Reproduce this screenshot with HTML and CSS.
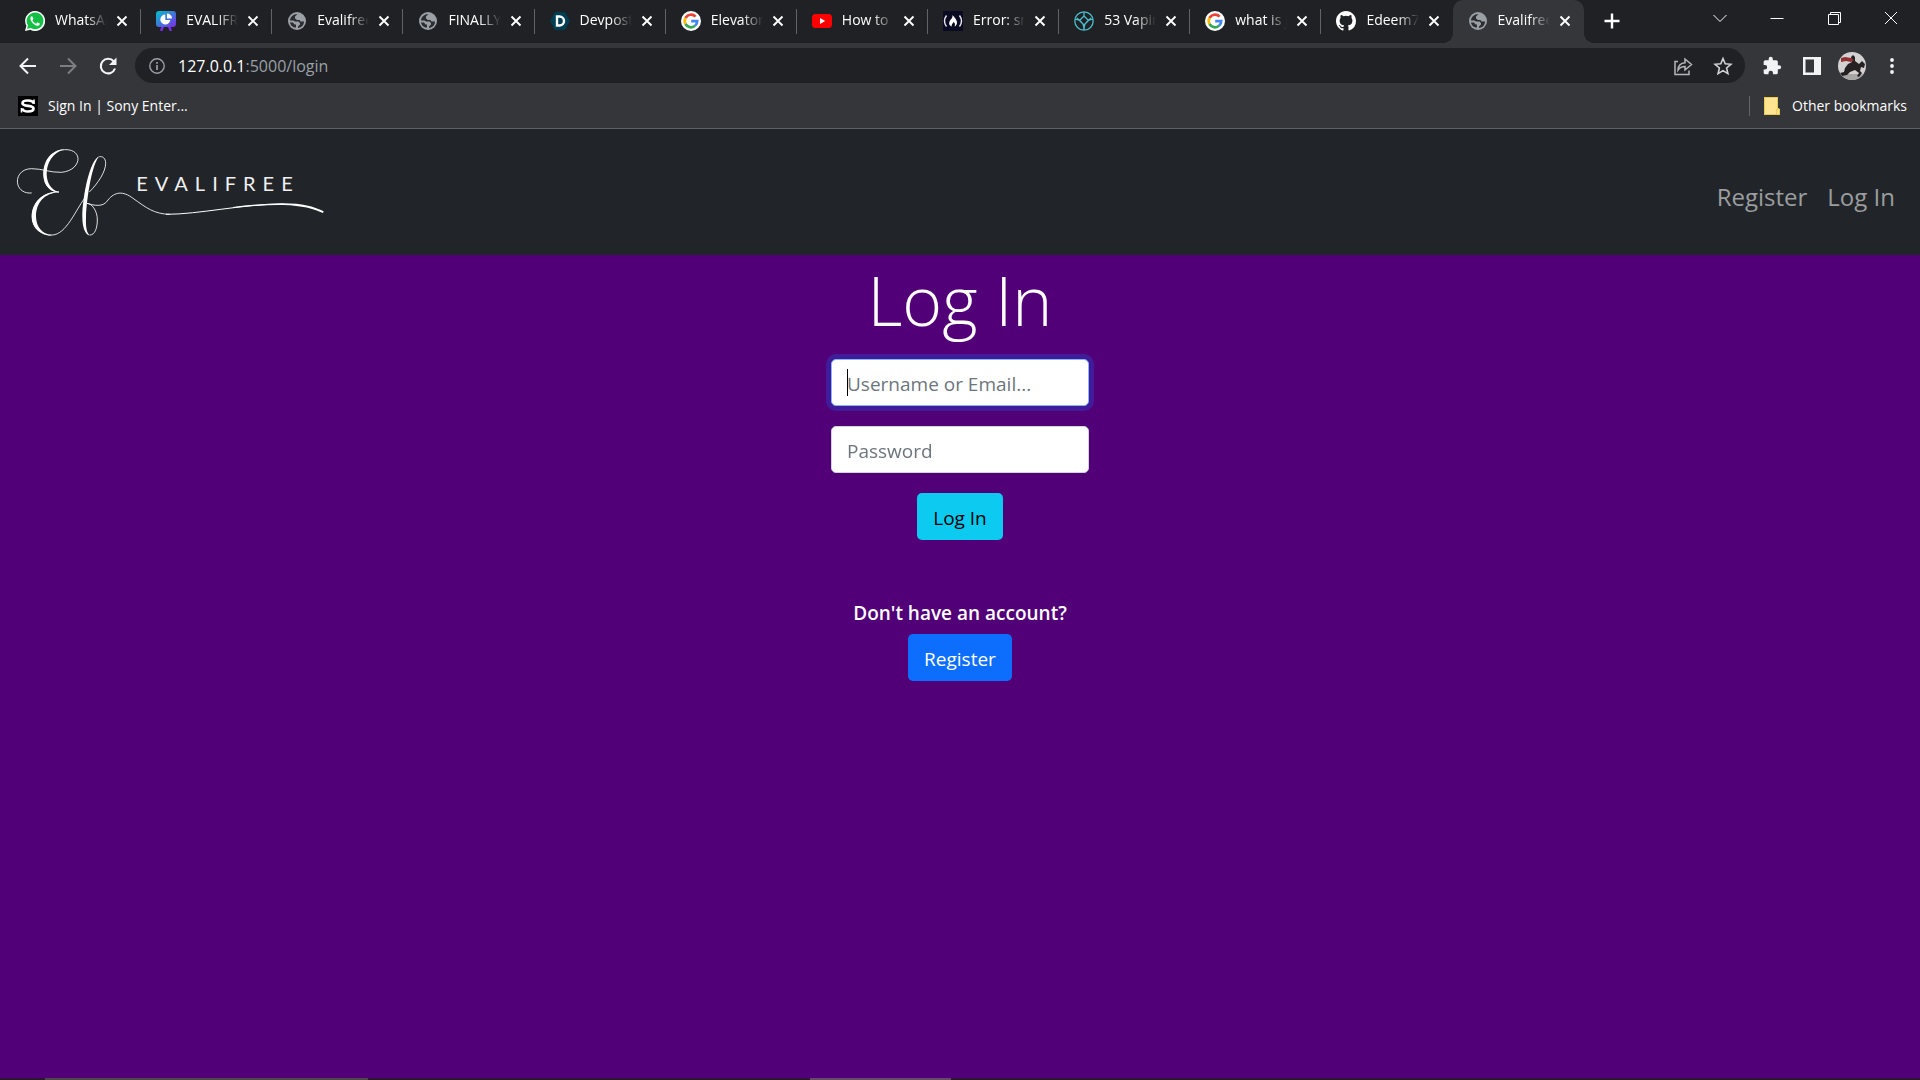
FILE: index.html
```html
<!DOCTYPE html>
<html lang="en">
<head>
<meta charset="utf-8">
<title>Evalifree: Log In</title>
<link rel="stylesheet" href="styles.css">
</head>
<body>
<svg class="defs" aria-hidden="true">
  <symbol id="x" viewBox="0 0 20 20"><path d="M5.500 5.500l9 9M14.500 5.500l-9 9" stroke="#fff" stroke-width="1.900"/></symbol>
  <symbol id="globe" viewBox="0 0 20 20"><circle cx="10" cy="10" r="9" fill="#9aa0a6"/><path d="M10.500 3L8 5.500v2l2 1.500h2.500l1 1.500H17c0 3.500-2.500 6-6 6.500v-1.500l2-2v-1.500l-1.500-1.500H8L6.500 9.500H3C3.200 6 6 3 10.500 3zM3 11.500h3l1.500 2H9v3C6 16.500 3.500 14.500 3 11.500z" fill="#2b2d31"/></symbol>
  <symbol id="google" viewBox="0 0 20 20"><circle cx="10" cy="10" r="10" fill="#fff"/><g fill="none" stroke-width="2.700"><path d="M14.600 5.600A6.300 6.300 0 0 0 4.500 7" stroke="#ea4335"/><path d="M4.500 7a6.300 6.300 0 0 0 0 6" stroke="#fbbc05"/><path d="M4.500 13a6.300 6.300 0 0 0 9.600 1.800" stroke="#34a853"/><path d="M14.100 14.800a6.300 6.300 0 0 0 2.100-4.600H10.200" stroke="#4285f4"/></g></symbol>
</svg>
<header class="browser">
  <div class="strip">
    <div class="tabs">
      <div class="tab"><svg class="fav" viewBox="0 0 20 20"><path d="M0 20l1.400-5.200A10 10 0 1 1 5.300 18.700z" fill="#fff"/><path d="M2 18.100l1-3.600A8.400 8.400 0 1 1 5.700 17.100z" fill="#12c143"/><path d="M6.600 5.200c-1.500.8-1.500 2.500-.9 3.900 1.200 2.700 3.200 4.700 6 5.600 1.400.4 3.300-.5 3.100-2.200l-2.300-1.200-1.300 1.400c-1.800-.7-3-1.900-3.800-3.500l1-1.400-1-2.400z" fill="#fff"/></svg><span class="title">WhatsApp</span><button class="close" aria-label="Close tab"><svg><use href="#x"/></svg></button></div>
      <div class="tab"><svg class="fav" viewBox="0 0 20 20"><defs><linearGradient id="board" x1="0" y1="0" x2="1" y2="1"><stop offset="0" stop-color="#00c4cc"/><stop offset="1" stop-color="#7d2ae8"/></linearGradient></defs><path d="M7 15l-1.500 4M13 15l1.500 4" stroke="#7d2ae8" stroke-width="2.500" stroke-linecap="round"/><rect width="20" height="16" rx="3" y="0" fill="url(#board)"/><path d="M9.300 3.500a5 5 0 1 0 5 5.500h-5z" fill="#fff"/><path d="M11 2.500v5h5a5 5 0 0 0-5-5z" fill="#fff"/></svg><span class="title">EVALIFREE</span><button class="close" aria-label="Close tab"><svg><use href="#x"/></svg></button></div>
      <div class="tab"><svg class="fav"><use href="#globe"/></svg><span class="title">Evalifree</span><button class="close" aria-label="Close tab"><svg><use href="#x"/></svg></button></div>
      <div class="tab"><svg class="fav"><use href="#globe"/></svg><span class="title">FINALLY</span><button class="close" aria-label="Close tab"><svg><use href="#x"/></svg></button></div>
      <div class="tab"><svg class="fav" viewBox="0 0 20 20"><path d="M5 1h10l5 9-5 9H5l-5-9z" fill="#003e54"/><path d="M7 5.500h2.500a4.500 4.500 0 0 1 0 9H7z" fill="none" stroke="#fff" stroke-width="2.400"/></svg><span class="title">Devpost</span><button class="close" aria-label="Close tab"><svg><use href="#x"/></svg></button></div>
      <div class="tab"><svg class="fav"><use href="#google"/></svg><span class="title">Elevator</span><button class="close" aria-label="Close tab"><svg><use href="#x"/></svg></button></div>
      <div class="tab"><svg class="fav" viewBox="0 0 20 20"><rect y="3" width="20" height="14" rx="3.500" fill="#f00"/><path d="M8 7l5.200 3L8 13z" fill="#fff"/></svg><span class="title">How to</span><button class="close" aria-label="Close tab"><svg><use href="#x"/></svg></button></div>
      <div class="tab"><svg class="fav" viewBox="0 0 20 20"><rect width="20" height="20" fill="#0a0a23"/><path d="M3.500 4.500q-4 5.500 0 11M16.500 4.500q4 5.500 0 11" fill="none" stroke="#e8e8f0" stroke-width="1.400"/><path d="M9.500 4c3 3 4.500 5.500 4.500 7.500 0 2-1 3.500-2.500 4 1-2 .5-3.500-1-4.500-.5 1.500-2.500 2.500-1.500 4.500-2.500-.5-3.500-2.500-2.500-5C7.500 8.500 10 7 9.500 4z" fill="#fff"/></svg><span class="title">Error: src</span><button class="close" aria-label="Close tab"><svg><use href="#x"/></svg></button></div>
      <div class="tab"><svg class="fav" viewBox="0 0 20 20"><g fill="none" stroke="#4bbccc" stroke-width="1.300"><circle cx="10" cy="10" r="9.200"/><path d="M10 5l4.500 4.500L10 14 5.500 9.500zM1 8.500c3.500-.5 9 2 9 10.500 0-8.500 5.500-11 9-10.500M10 1v4M5.500 9.500L3 7M14.500 9.500L17 7"/></g></svg><span class="title">53 Vaping</span><button class="close" aria-label="Close tab"><svg><use href="#x"/></svg></button></div>
      <div class="tab"><svg class="fav"><use href="#google"/></svg><span class="title">what is js</span><button class="close" aria-label="Close tab"><svg><use href="#x"/></svg></button></div>
      <div class="tab before-active"><svg class="fav" viewBox="0 0 16 16"><path fill="#fff" d="M8 0C3.580 0 0 3.580 0 8c0 3.540 2.290 6.530 5.470 7.590.4.070.55-.17.55-.38 0-.19-.01-.82-.01-1.490-2.010.37-2.530-.49-2.690-.94-.09-.23-.48-.94-.82-1.130-.28-.15-.68-.52-.01-.53.63-.01 1.080.58 1.230.82.72 1.210 1.870.87 2.330.66.07-.52.28-.87.51-1.070-1.780-.2-3.640-.89-3.640-3.950 0-.87.31-1.590.82-2.150-.08-.2-.36-1.020.08-2.120 0 0 .67-.21 2.200.82a7.600 7.600 0 0 1 4 0c1.530-1.040 2.200-.82 2.200-.82.44 1.100.16 1.920.08 2.120.51.56.82 1.270.82 2.150 0 3.070-1.870 3.750-3.650 3.950.29.25.54.73.54 1.480 0 1.070-.01 1.930-.01 2.200 0 .21.15.46.55.38A8 8 0 0 0 16 8c0-4.420-3.580-8-8-8z"/></svg><span class="title">Edeem77</span><button class="close" aria-label="Close tab"><svg><use href="#x"/></svg></button></div>
      <div class="tab active"><svg class="fav"><use href="#globe"/></svg><span class="title">Evalifree</span><button class="close" aria-label="Close tab"><svg><use href="#x"/></svg></button></div>
    </div>
    <button class="new-tab" aria-label="New tab"><svg viewBox="0 0 20 20"><path d="M10 2.500v15M2.500 10h15" stroke="#fff" stroke-width="2.400"/></svg></button>
    <div class="window">
      <button aria-label="Search tabs"><svg viewBox="0 0 20 20"><path d="M3.500 7l6.500 6.500L16.500 7"/></svg></button>
      <button aria-label="Minimize"><svg viewBox="0 0 20 20"><path d="M3.500 10.500h13"/></svg></button>
      <button aria-label="Restore"><svg viewBox="0 0 20 20"><path d="M4.500 6.500h10v10h-10zM6.500 6.500v-2h10v10h-2"/></svg></button>
      <button aria-label="Close window"><svg viewBox="0 0 20 20"><path d="M4 4l12 12M16 4L4 16"/></svg></button>
    </div>
  </div>
  <div class="toolbar">
    <button aria-label="Back"><svg viewBox="0 0 20 20"><path d="M18 10H3M10 2.500L2.500 10l7.500 7.500" fill="none" stroke="#f1f3f4" stroke-width="2"/></svg></button>
    <button aria-label="Forward"><svg viewBox="0 0 20 20"><path d="M2 10h15M10 2.500l7.500 7.500-7.500 7.500" fill="none" stroke="#7d7e81" stroke-width="2"/></svg></button>
    <button aria-label="Reload"><svg viewBox="0 0 20 20"><path d="M17 12.500A7.300 7.300 0 1 1 15.800 5.500" fill="none" stroke="#f1f3f4" stroke-width="2.100"/><path d="M18.500 1.500V9H11z" fill="#f1f3f4"/></svg></button>
    <div class="address">
      <svg class="info" viewBox="0 0 16 16"><circle cx="8" cy="8" r="7.200" fill="none" stroke="#9aa0a6" stroke-width="1.400"/><path d="M8 7v5M8 4v1.800" stroke="#9aa0a6" stroke-width="1.700"/></svg>
      <span class="url">127.0.0.1<span>:5000/login</span></span>
      <button aria-label="Share"><svg viewBox="0 0 20 20"><path d="M5 5.500H2v13h14v-4M5 14c.3-4.500 3-7 7-7.200V3l6.500 5.500-6.500 5.500v-3.500c-3 0-5.300 1-7 3.500z" fill="none" stroke="#b4b6b9" stroke-width="1.500"/></svg></button>
      <button aria-label="Bookmark"><svg viewBox="0 0 20 20"><path d="M10 2.500l2.200 5.300 5.700.5-4.300 3.700 1.300 5.600-4.900-3-4.900 3L6.400 12 2.100 8.300l5.700-.5z" fill="none" stroke="#d0d2d4" stroke-width="1.600"/></svg></button>
    </div>
    <button aria-label="Extensions"><svg viewBox="0 0 24 24"><path fill="#f1f3f4" d="M20.500 11H19V7a2 2 0 0 0-2-2h-4V3.500a2.500 2.500 0 0 0-5 0V5H4a2 2 0 0 0-2 2v3.800h1.500a2.700 2.700 0 0 1 0 5.400H2V20a2 2 0 0 0 2 2h3.800v-1.500a2.700 2.700 0 0 1 5.400 0V22H17a2 2 0 0 0 2-2v-4h1.500a2.500 2.500 0 0 0 0-5z"/></svg></button>
    <button aria-label="Side panel"><svg viewBox="0 0 20 20"><path fill="#f1f3f4" fill-rule="evenodd" d="M1 1h18v18H1zM3.500 3.500v13H12v-13z"/></svg></button>
    <button class="avatar" aria-label="Profile"><svg viewBox="0 0 28 28"><defs><clipPath id="round"><circle cx="14" cy="14" r="14"/></clipPath></defs><g clip-path="url(#round)"><path fill="#d3d1d1" d="M0 0h28v28H0z"/><path fill="#a9a6a6" d="M0 22h28v6H0z"/><path fill="#252122" d="M13 5l2-2 2 2v4l4 3 3-3 3 3-1 4-3-1-1 4 2 2-3 4-2-1 2-3-4-3-5 2-3 3-5 1-2-3 4-1 1-4 3-4 4-2z"/><path fill="#923033" d="M3 6l4-1 6 1 3 2-3 2-5-1-5 1z"/></g></svg></button>
    <button aria-label="Menu"><svg viewBox="0 0 20 20"><g fill="#f1f3f4"><circle cx="10" cy="4" r="1.900"/><circle cx="10" cy="10" r="1.900"/><circle cx="10" cy="16" r="1.900"/></g></svg></button>
  </div>
  <div class="bookmarks">
    <a href="#"><svg class="fav" viewBox="0 0 20 20"><rect width="20" height="20"/><path d="M15.500 7.500c-.5-2.500-3-3-5.500-3-3 0-5.500.7-5.500 2.700C4.500 11 15.500 8.800 15.500 12.500c0 2-2.500 3-5.500 3-2.500 0-5-.5-5.700-3" fill="none" stroke="#fff" stroke-width="2.700"/><path d="M16 3.500V8M3.500 12v4.500" stroke="#fff" stroke-width="1.600"/></svg><span>Sign In | Sony Enter...</span></a>
    <a class="other" href="#"><svg class="folder" viewBox="0 0 16 18"><path d="M0 0h14v11l2 1v6H0z" fill="#ffe591"/><path d="M.5.500h13v11l2 1v5H.5zM12.500 17v-4.500h1.500" fill="none" stroke="#eccb52"/></svg><span>Other bookmarks</span></a>
  </div>
</header>
<nav class="navbar">
  <a class="brand" href="#" aria-label="Evalifree">
    <svg viewBox="40 75 939 285">
      <g fill="none" stroke="#fff" stroke-linecap="round" stroke-linejoin="round">
        <path stroke-width="3" opacity=".85" d="M95 219C40 224 38 147 95 146 130 146 150 158 185 157 220 154 236 132 235 115 233 96 215 88 195 89 150 92 133 130 133 165 134 200 155 215 178 216 128 215 98 250 98 290 98 325 125 345 158 345 200 343 228 270 254 236M270 215C295 190 318 155 318 130 318 114 308 108 300 110M272 345C285 345 293 325 293 300 293 270 275 250 262 250 300 262 315 255 325 240 345 215 370 212 400 235 440 263 462 282 510 283"/>
        <path stroke-width="3" d="M500 283C600 283 720 253 850 252"/>
      </g>
      <g fill="#fff">
        <path d="M195 88C148 90 130 130 131 165 132 200 155 217 178 217 155 209 143 192 141 165 140 130 158 98 195 88z"/>
        <path d="M178 216C126 214 96 250 96 290 96 325 125 347 158 347 128 341 110 322 109 290 109 250 132 220 178 216z"/>
        <path d="M300 109C270 115 248 235 248 290 248 330 260 346 272 346 260 340 258 320 259 290 261 235 278 125 300 109z"/>
        <path d="M700 261C750 255 800 250 850 250 910 250 940 259 972 274L970 279C940 266 910 257 850 255 800 254 750 258 700 264z"/>
      </g>
      <text class="wordmark" x="410" y="212">EVALIFREE</text>
    </svg>
  </a>
  <div class="links"><a href="#">Register</a><a href="#">Log In</a></div>
</nav>
<main>
  <h1>Log In</h1>
  <form>
    <div class="field"><input class="control focused" type="text" placeholder="Username or Email..." aria-label="Username or Email" autofocus><span class="caret"></span></div>
    <div class="field"><input class="control" type="password" placeholder="Password" aria-label="Password"></div>
    <button class="btn info-btn" type="submit">Log In</button>
  </form>
  <p>Don't have an account?</p>
  <a class="btn primary" href="#">Register</a>
</main>
<footer class="taskbar"><span class="search"></span><span class="app"></span></footer>
</body>
</html>
```
FILE: styles.css
```css
* { box-sizing: border-box; }
body {
  margin: 0;
  min-height: 100vh;
  display: flex;
  flex-direction: column;
  background: #520078;
  color: #fff;
  font-family: "Open Sans", "Noto Sans", sans-serif;
  font-size: 19px;
}
a { color: inherit; text-decoration: none; }
button { border: 0; padding: 0; background: none; font: inherit; color: inherit; }
svg { display: block; flex: none; }
.defs { display: none; }

.browser { background: #35363a; font-size: 14px; border-bottom: 1px solid #606166; }
.strip { display: flex; height: 43px; background: #202124; }
.tabs { display: flex; width: 83%; padding: 0 10px; }
.tab {
  position: relative;
  display: flex;
  flex: 1;
  align-items: center;
  min-width: 0;
  padding: 0 9px 1px 15px;
}
.tab::after {
  content: "";
  position: absolute;
  right: 0;
  top: 9px;
  width: 1px;
  height: 25px;
  background: #606368;
}
.before-active::after { display: none; }
.fav { width: 20px; height: 20px; }
.title {
  flex: 1;
  min-width: 0;
  margin: 0 5px 0 10px;
  padding-bottom: 2px;
  overflow: hidden;
  white-space: nowrap;
  line-height: 20px;
  -webkit-mask-image: linear-gradient(to right, #000 60%, transparent);
  mask-image: linear-gradient(to right, #000 60%, transparent);
}
.close, .close svg { width: 20px; height: 20px; }
.active { background: #35363a; border-radius: 10px 10px 0 0; }
.active::before, .active::after {
  content: "";
  position: absolute;
  display: block;
  top: auto;
  bottom: 0;
  width: 10px;
  height: 10px;
}
.active::before { left: -10px; background: radial-gradient(circle at 0 0, #202124 10px, #35363a 10px); }
.active::after { right: -10px; background: radial-gradient(circle at 100% 0, #202124 10px, #35363a 10px); }
.new-tab { width: 36px; height: 42px; display: grid; place-items: center; }
.new-tab svg { width: 20px; height: 20px; }
.window { display: flex; height: 36px; margin-left: auto; padding-right: 1px; }
.window button { width: 57px; display: grid; place-items: center; }
.window svg { width: 20px; height: 20px; fill: none; stroke: #fff; stroke-width: 1; }

.toolbar { display: flex; align-items: center; height: 45px; padding: 0 8px; }
.toolbar button { width: 40px; height: 35px; display: grid; place-items: center; flex: none; }
.toolbar button svg { width: 20px; height: 20px; }
.toolbar .avatar svg { width: 28px; height: 28px; }
.address {
  display: flex;
  flex: 1;
  align-items: center;
  height: 35px;
  margin: 0 7px;
  padding: 0 2px 0 14px;
  border-radius: 18px;
  background: #202124;
}
.info { width: 16px; height: 16px; }
.url { flex: 1; margin-left: 13px; font-size: 16px; }
.url span { color: #9aa0a6; }

.bookmarks { display: flex; justify-content: space-between; height: 40px; padding: 8px 13px 12px 18px; }
.bookmarks a { display: flex; align-items: center; gap: 10px; }
.bookmarks span { padding-bottom: 2px; }
.other { border-left: 1px solid #606368; padding-left: 14px; }
.bookmarks .other { gap: 12px; }
.folder { width: 16px; height: 18px; }

.navbar {
  display: flex;
  align-items: center;
  justify-content: space-between;
  padding: 16px 25px 15px 13px;
  background: #212529;
}
.brand svg { width: 313px; height: 95px; }
.wordmark { font-family: Lato, sans-serif; font-size: 60px; letter-spacing: 21px; fill: #f0f0f0; }
.links { display: flex; gap: 20px; font-size: 24px; line-height: 38px; color: #9b9d9f; padding-top: 9px; }

main { flex: 1; display: flex; flex-direction: column; align-items: center; }
h1 { margin: 0 0 14px; font-size: 68px; font-weight: 300; line-height: 90px; }
form { display: flex; flex-direction: column; align-items: center; gap: 20px; margin-bottom: 58px; }
.field { position: relative; }
.control {
  display: block;
  width: 258px;
  height: 47px;
  padding: 3px 15px 0;
  border: 1px solid #ced4da;
  border-radius: 5px;
  outline: 0;
  background: #fff;
  color: #212529;
  font: inherit;
  caret-color: transparent;
}
.control::placeholder { color: #6c757d; opacity: 1; }
.focused { border-color: #86b7fe; box-shadow: 0 0 0 5px #401c9a; }
.caret { position: absolute; left: 16px; top: 10px; width: 1px; height: 27px; background: #000; }
.btn { padding: 10px 16px 7px; border-radius: 5px; line-height: 30px; }
.info-btn { background: #0dcaf0; color: #000; }
p { margin: 0 0 6px; font-weight: 600; line-height: 30px; }
.primary { background: #0d6efd; }

.taskbar { display: flex; height: 2px; background: #2b1730; }
.search { width: 323px; margin: 0 23% 0 45px; background: #4a474d; }
.app { width: 141px; background: #654a6c; }
```
